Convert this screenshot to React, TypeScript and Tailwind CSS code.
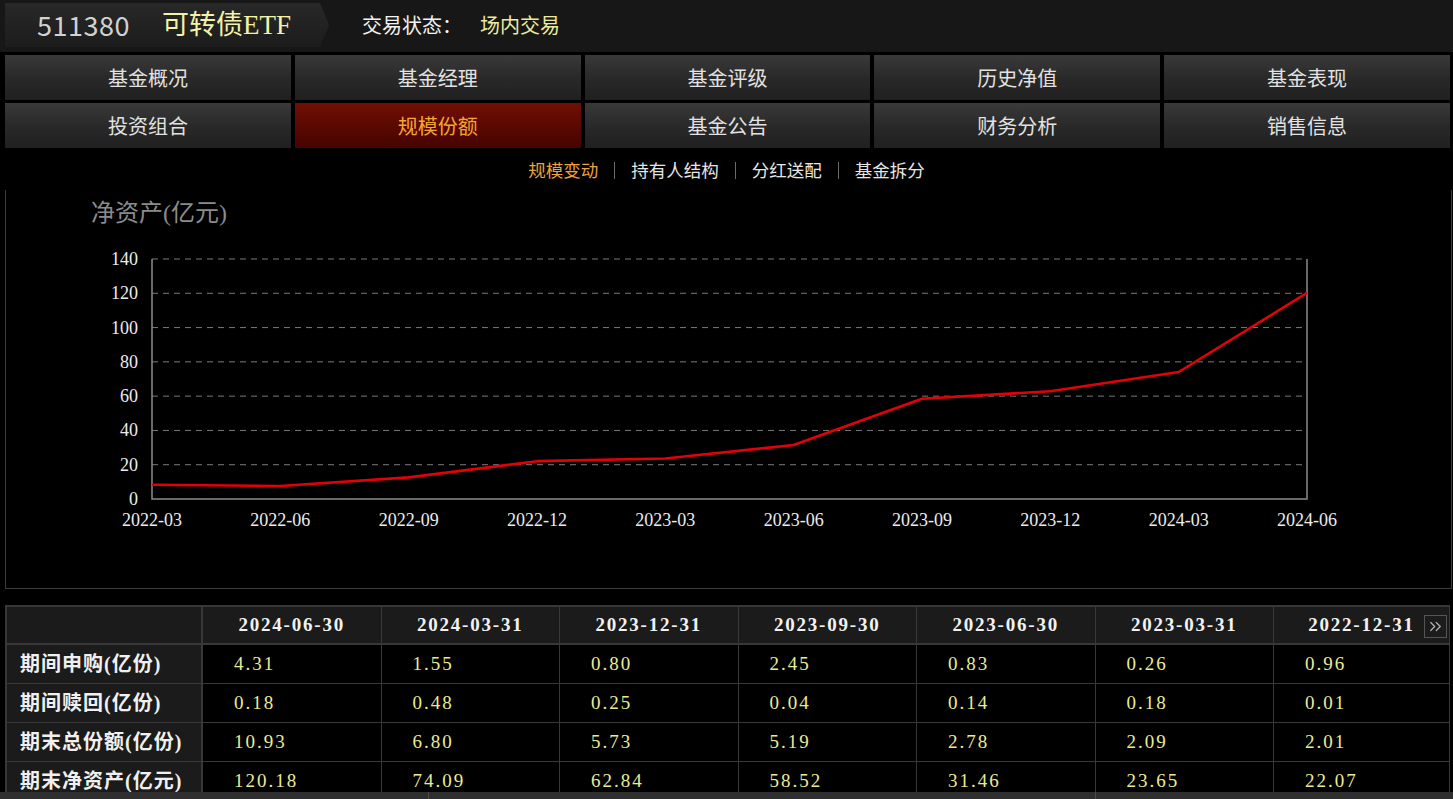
import React from "react";
import { ChevronsRight } from "lucide-react";

const sans = "font-['Noto_Sans_CJK_SC','Noto_Sans',sans-serif]";
const serif = "font-['Liberation_Serif','Noto_Sans_CJK_SC',serif]";

const navItems = [
  "基金概况",
  "基金经理",
  "基金评级",
  "历史净值",
  "基金表现",
  "投资组合",
  "规模份额",
  "基金公告",
  "财务分析",
  "销售信息",
];

const subNav = ["规模变动", "持有人结构", "分红送配", "基金拆分"];

const xLabels = [
  "2022-03",
  "2022-06",
  "2022-09",
  "2022-12",
  "2023-03",
  "2023-06",
  "2023-09",
  "2023-12",
  "2024-03",
  "2024-06",
];
const series = [8.3, 7.6, 12.6, 22.07, 23.65, 31.46, 58.52, 62.84, 74.09, 120.18];

const dates = [
  "2024-06-30",
  "2024-03-31",
  "2023-12-31",
  "2023-09-30",
  "2023-06-30",
  "2023-03-31",
  "2022-12-31",
];

const rows: { label: string; values: string[] }[] = [
  { label: "期间申购(亿份)", values: ["4.31", "1.55", "0.80", "2.45", "0.83", "0.26", "0.96"] },
  { label: "期间赎回(亿份)", values: ["0.18", "0.48", "0.25", "0.04", "0.14", "0.18", "0.01"] },
  { label: "期末总份额(亿份)", values: ["10.93", "6.80", "5.73", "5.19", "2.78", "2.09", "2.01"] },
  { label: "期末净资产(亿元)", values: ["120.18", "74.09", "62.84", "58.52", "31.46", "23.65", "22.07"] },
];

function Chart() {
  // plot box in svg coords
  const x0 = 146;
  const x1 = 1301;
  const yTop = 28;
  const yBot = 268;
  const step = (x1 - x0) / (xLabels.length - 1);
  const yOf = (v: number) => yBot - (v / 140) * (yBot - yTop);
  const ticks = [0, 20, 40, 60, 80, 100, 120, 140];
  const pts = series.map((v, i) => `${x0 + i * step},${yOf(v)}`).join(" ");

  return (
    <svg width={1445} height={357} className="block">
      {ticks.slice(1).map((t) => (
        <line
          key={t}
          x1={x0}
          x2={x1}
          y1={yOf(t)}
          y2={yOf(t)}
          stroke="#7a7a7a"
          strokeWidth={1}
          strokeDasharray="6 5"
        />
      ))}
      <polyline points={`${x0},${yTop} ${x0},${yBot} ${x1},${yBot} ${x1},${yTop}`} fill="none" stroke="#8c8c8c" strokeWidth={1.5} />
      {ticks.map((t) => (
        <text
          key={t}
          x={132}
          y={yOf(t)}
          textAnchor="end"
          dominantBaseline="central"
          fill="#ececec"
          fontSize={18}
          fontFamily="'Liberation Serif', serif"
        >
          {t}
        </text>
      ))}
      {xLabels.map((l, i) => (
        <text
          key={l}
          x={x0 + i * step}
          y={289}
          textAnchor="middle"
          dominantBaseline="central"
          fill="#ececec"
          fontSize={18}
          fontFamily="'Liberation Serif', serif"
        >
          {l}
        </text>
      ))}
      <polyline points={pts} fill="none" stroke="#e3000b" strokeWidth={2.6} strokeLinejoin="round" />
    </svg>
  );
}

export default function App() {
  return (
    <div className={`w-[1453px] h-[799px] overflow-hidden bg-black flex flex-col ${sans}`}>
      {/* top header */}
      <div className="h-[52px] shrink-0 bg-[#171717] flex items-start pt-[3px]">
        <div className="ml-[5px] w-[324px] h-[44px] flex items-center pl-[32px] bg-linear-to-b from-[#282828] to-[#1c1c1c] [clip-path:polygon(0_0,315px_0,100%_50%,315px_100%,0_100%)]">
          <span className="w-[125px] text-[27px] text-[#d2d2d2] tracking-[0.5px]">511380</span>
          <span className={`text-[27px] text-[#f3f3a8] ${serif}`}>可转债ETF</span>
        </div>
        <div className="h-[44px] flex items-center ml-[33px]">
          <span className="text-[20px] text-[#f2f2f2]">交易状态：</span>
          <span className="ml-[18px] text-[20px] text-[#ecec9e]">场内交易</span>
        </div>
      </div>

      {/* nav tabs */}
      <div className="mt-[3px] ml-[5px] w-[1445px] grid grid-cols-5 gap-x-[4px] gap-y-[3px]">
        {navItems.map((n) => {
          const active = n === "规模份额";
          return (
            <div
              key={n}
              className={
                active
                  ? "h-[45px] flex items-center justify-center text-[20px] text-[#f4a634] bg-linear-to-b from-[#710f04] to-[#460400]"
                  : "h-[45px] flex items-center justify-center text-[20px] text-[#e2e2e2] bg-linear-to-b from-[#3a3a3a] via-[#292929] to-[#202020]"
              }
            >
              {n}
            </div>
          );
        })}
      </div>

      {/* sub nav */}
      <div className="h-[42px] shrink-0 flex items-center justify-center pt-[2px]">
        {subNav.map((s, i) => (
          <React.Fragment key={s}>
            {i > 0 && <span className="mx-[16px] w-px h-[17px] bg-[#6a6a6a]" />}
            <span className={i === 0 ? "text-[17.5px] text-[#eea23c]" : "text-[17.5px] text-[#e6e6e6]"}>{s}</span>
          </React.Fragment>
        ))}
      </div>

      {/* chart panel */}
      <div className="ml-[5px] w-[1447px] h-[399px] shrink-0 border-x border-b border-[#3c3c3c] pt-[5px] flex flex-col">
        <div className={`h-[36px] leading-[36px] pl-[85px] text-[24px] text-[#8b8b8b] ${serif}`}>净资产(亿元)</div>
        <Chart />
      </div>

      {/* table */}
      <div className="mt-[16px] ml-[5px] w-[1445px] h-[187px] shrink-0 overflow-hidden">
        <div className="relative border-t-2 border-l-2 border-[#383838] grid grid-cols-[196px_repeat(6,178.5px)_1fr]">
          <div className="h-[38px] bg-[#1b1b1b] border-r-2 border-b-2 border-[#383838]" />
          {dates.map((d) => (
            <div
              key={d}
              className={`h-[38px] bg-[#1b1b1b] border-r border-b-2 border-[#383838] flex items-center justify-center text-[19px] font-bold tracking-[1.8px] text-[#f2f2f2] ${serif}`}
            >
              {d}
            </div>
          ))}
          {rows.map((r) => (
            <React.Fragment key={r.label}>
              <div
                className={`h-[39px] bg-[#1b1b1b] border-r-2 border-b border-[#383838] flex items-center pl-[13px] text-[20px] font-bold tracking-[1px] text-[#f0f0f0] ${serif}`}
              >
                {r.label}
              </div>
              {r.values.map((v, i) => (
                <div
                  key={i}
                  className={`h-[39px] border-r border-b border-[#383838] flex items-center pl-[31px] text-[19px] tracking-[2px] text-[#ebeb95] ${serif}`}
                >
                  {v}
                </div>
              ))}
            </React.Fragment>
          ))}
          <div className="absolute top-[8px] right-[3px] w-[23px] h-[23px] bg-[#1c1c1c] border border-[#555] flex items-center justify-center">
            <ChevronsRight size={19} strokeWidth={1.6} className="text-[#b0b0b0]" />
          </div>
        </div>
      </div>

      {/* horizontal scrollbar */}
      <div className="h-[7px] shrink-0 bg-[#2f2f2f] flex">
        <div className="w-[429px] border-r border-[#4a4a4a]" />
        <div className="w-[667px] border-r border-[#4a4a4a]" />
        <div className="flex-1" />
      </div>
    </div>
  );
}
